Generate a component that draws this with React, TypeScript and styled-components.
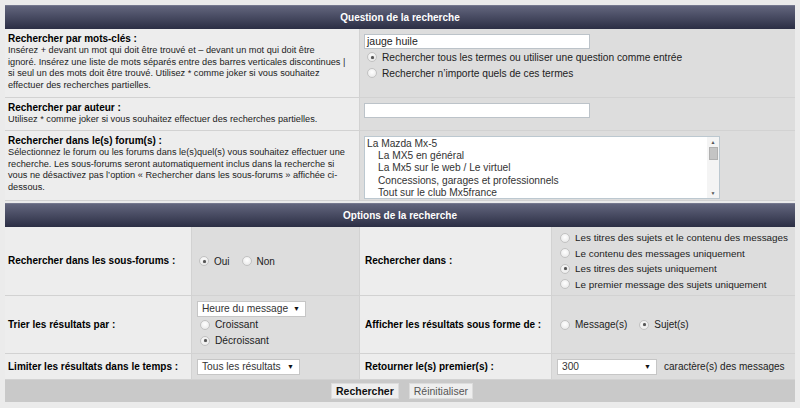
import React from "react";
import styled, { createGlobalStyle } from "styled-components";

const GlobalStyle = createGlobalStyle`
  html, body {
    margin: 0;
    padding: 0;
    background: #ebebeb;
  }
  body {
    font-family: "Liberation Sans", Arial, sans-serif;
    color: #111;
  }
`;

const Page = styled.div`
  width: 790px;
  padding: 5px;
`;

const SectionHeader = styled.div<{ $gap?: boolean }>`
  height: 24px;
  margin-top: ${(p) => (p.$gap ? "2px" : "0")};
  display: flex;
  align-items: center;
  justify-content: center;
  background: linear-gradient(#62657d, #2b2e44);
  border-top: 1px solid #75788e;
  box-sizing: border-box;
  color: #fff;
  font-weight: bold;
  font-size: 10px;
`;

const TopRow = styled.div<{ $height: number }>`
  display: grid;
  grid-template-columns: 355px 1fr;
  height: ${(p) => p.$height}px;
  border-bottom: 1px solid #d2d2d2;
  box-sizing: border-box;
`;

const Cell = styled.div<{ $tone: "light" | "dark" }>`
  background: ${(p) => (p.$tone === "light" ? "#ededed" : "#dddddd")};
  border-right: 1px solid #d2d2d2;
  box-sizing: border-box;
  &:last-child {
    border-right: none;
  }
`;

const DescCell = styled(Cell)`
  padding: 4px 4px 0 3px;
  overflow: hidden;
`;

const FieldCell = styled(Cell)`
  padding: 5px 4px 0 4px;
`;

const Label = styled.div`
  font-weight: bold;
  font-size: 10px;
  line-height: 12px;
  color: #000;
`;

const Explain = styled.div`
  font-size: 9.2px;
  line-height: 11.7px;
  color: #222;
  white-space: nowrap;
`;

const TextInput = styled.div`
  width: 226px;
  height: 15px;
  box-sizing: border-box;
  background: #fff;
  border: 1px solid #bcc3c9;
  font-size: 10.5px;
  line-height: 13px;
  padding-left: 2px;
  color: #222;
`;

const RadioLine = styled.div<{ $height?: number; $size?: number }>`
  display: flex;
  align-items: center;
  height: ${(p) => p.$height ?? 16}px;
  font-size: ${(p) => p.$size ?? 10.2}px;
  color: #222;
  white-space: nowrap;
`;

const RadioDot = styled.span<{ $checked?: boolean; $spaced?: boolean }>`
  display: inline-block;
  position: relative;
  width: 10px;
  height: 10px;
  box-sizing: border-box;
  border-radius: 50%;
  border: 1px solid #c2c2c2;
  background: radial-gradient(circle at 50% 40%, #ffffff, #e4e4e4);
  margin-left: ${(p) => (p.$spaced ? "12px" : "3px")};
  margin-right: 5px;
  flex-shrink: 0;
  &::after {
    content: "";
    display: ${(p) => (p.$checked ? "block" : "none")};
    position: absolute;
    left: 2.5px;
    top: 2.5px;
    width: 3px;
    height: 3px;
    border-radius: 50%;
    background: #555;
    box-shadow: 0 0 1px #777;
  }
`;

const ListBox = styled.div`
  width: 356px;
  height: 63px;
  display: flex;
  box-sizing: border-box;
  background: #fff;
  border: 1px solid #bcc8d0;
`;

const ListItems = styled.div`
  flex: 1;
  padding: 1px 0 0 2px;
  overflow: hidden;
`;

const ListItem = styled.div<{ $indent?: boolean }>`
  font-size: 10.2px;
  line-height: 12.2px;
  color: #333;
  padding-left: ${(p) => (p.$indent ? "11px" : "0")};
  white-space: nowrap;
`;

const ScrollTrack = styled.div`
  width: 12px;
  display: flex;
  flex-direction: column;
  align-items: center;
  background: #f4f4f4;
`;

const ScrollArrow = styled.div`
  height: 10px;
  display: flex;
  align-items: center;
  justify-content: center;
  font-size: 5px;
  color: #555;
`;

const ScrollThumb = styled.div`
  width: 9px;
  height: 13px;
  background: #c4c4c4;
  border: 1px solid #b0b0b0;
  box-sizing: border-box;
`;

const ScrollSpacer = styled.div`
  flex: 1;
`;

const OptRow = styled.div<{ $height: number }>`
  display: grid;
  grid-template-columns: 187px 168px 192px 1fr;
  height: ${(p) => p.$height}px;
  border-bottom: 1px solid #d2d2d2;
  box-sizing: border-box;
`;

const OptCell = styled(Cell)<{ $pad?: number }>`
  display: flex;
  flex-direction: column;
  justify-content: center;
  padding-left: ${(p) => p.$pad ?? 4}px;
`;

const Inline = styled.div`
  display: flex;
  align-items: center;
  font-size: 10px;
  color: #222;
  white-space: nowrap;
`;

const Select = styled.div<{ $width: number }>`
  width: ${(p) => p.$width}px;
  height: 16px;
  box-sizing: border-box;
  display: flex;
  align-items: center;
  justify-content: space-between;
  background: #fff;
  border: 1px solid #c6c6c6;
  padding: 0 5px 0 4px;
  font-size: 10.2px;
  color: #333;
  margin-right: 7px;
  &::after {
    content: "▼";
    font-size: 7px;
    color: #111;
  }
`;

const Footer = styled.div`
  height: 22px;
  display: flex;
  align-items: center;
  justify-content: center;
  gap: 10px;
  background: #c9c9c9;
  padding-left: 4px;
`;

const Button = styled.div<{ $primary?: boolean }>`
  height: 16px;
  display: flex;
  align-items: center;
  padding: 0 4px;
  background: #eeeeee;
  border: 1px solid #dcdcdc;
  box-sizing: border-box;
  font-size: 10.5px;
  font-weight: ${(p) => (p.$primary ? "bold" : "normal")};
  color: ${(p) => (p.$primary ? "#111" : "#555")};
`;

const forums = [
  { name: "La Mazda Mx-5", indent: false },
  { name: "La MX5 en général", indent: true },
  { name: "La Mx5 sur le web / Le virtuel", indent: true },
  { name: "Concessions, garages et professionnels", indent: true },
  { name: "Tout sur le club Mx5france", indent: true },
];

const searchIn = [
  { text: "Les titres des sujets et le contenu des messages", checked: false },
  { text: "Le contenu des messages uniquement", checked: false },
  { text: "Les titres des sujets uniquement", checked: true },
  { text: "Le premier message des sujets uniquement", checked: false },
];

const App = (): JSX.Element => {
  return (
    <>
      <GlobalStyle />
      <Page>
        <SectionHeader>Question de la recherche</SectionHeader>

        <TopRow $height={69}>
          <DescCell $tone="light">
            <Label>Rechercher par mots-clés :</Label>
            <Explain>
              Insérez + devant un mot qui doit être trouvé et – devant un mot qui doit être
              <br />
              ignoré. Insérez une liste de mots séparés entre des barres verticales discontinues |
              <br />
              si seul un des mots doit être trouvé. Utilisez * comme joker si vous souhaitez
              <br />
              effectuer des recherches partielles.
            </Explain>
          </DescCell>
          <FieldCell $tone="dark">
            <TextInput>jauge huile</TextInput>
            <RadioLine>
              <RadioDot $checked />
              Rechercher tous les termes ou utiliser une question comme entrée
            </RadioLine>
            <RadioLine>
              <RadioDot />
              Rechercher n’importe quels de ces termes
            </RadioLine>
          </FieldCell>
        </TopRow>

        <TopRow $height={33}>
          <DescCell $tone="light">
            <Label>Rechercher par auteur :</Label>
            <Explain>Utilisez * comme joker si vous souhaitez effectuer des recherches partielles.</Explain>
          </DescCell>
          <FieldCell $tone="dark">
            <TextInput />
          </FieldCell>
        </TopRow>

        <TopRow $height={70}>
          <DescCell $tone="light">
            <Label>Rechercher dans le(s) forum(s) :</Label>
            <Explain>
              Sélectionnez le forum ou les forums dans le(s)quel(s) vous souhaitez effectuer une
              <br />
              recherche. Les sous-forums seront automatiquement inclus dans la recherche si
              <br />
              vous ne désactivez pas l’option « Rechercher dans les sous-forums » affichée ci-
              <br />
              dessous.
            </Explain>
          </DescCell>
          <FieldCell $tone="dark">
            <ListBox>
              <ListItems>
                {forums.map((f) => (
                  <ListItem key={f.name} $indent={f.indent}>
                    {f.name}
                  </ListItem>
                ))}
              </ListItems>
              <ScrollTrack>
                <ScrollArrow>▲</ScrollArrow>
                <ScrollThumb />
                <ScrollSpacer />
                <ScrollArrow>▼</ScrollArrow>
              </ScrollTrack>
            </ListBox>
          </FieldCell>
        </TopRow>

        <SectionHeader $gap>Options de la recherche</SectionHeader>

        <OptRow $height={69}>
          <OptCell $tone="light" $pad={3}>
            <Label>Rechercher dans les sous-forums :</Label>
          </OptCell>
          <OptCell $tone="dark">
            <Inline>
              <RadioDot $checked />
              Oui
              <RadioDot $spaced />
              Non
            </Inline>
          </OptCell>
          <OptCell $tone="light" $pad={5}>
            <Label>Rechercher dans :</Label>
          </OptCell>
          <OptCell $tone="dark" $pad={5}>
            {searchIn.map((s) => (
              <RadioLine key={s.text} $height={15.5} $size={9.9}>
                <RadioDot $checked={s.checked} />
                {s.text}
              </RadioLine>
            ))}
          </OptCell>
        </OptRow>

        <OptRow $height={58}>
          <OptCell $tone="light" $pad={3}>
            <Label>Trier les résultats par :</Label>
          </OptCell>
          <OptCell $tone="dark" $pad={5}>
            <Select $width={109}>Heure du message</Select>
            <RadioLine $height={16}>
              <RadioDot />
              Croissant
            </RadioLine>
            <RadioLine $height={16}>
              <RadioDot $checked />
              Décroissant
            </RadioLine>
          </OptCell>
          <OptCell $tone="light" $pad={5}>
            <Label>Afficher les résultats sous forme de :</Label>
          </OptCell>
          <OptCell $tone="dark" $pad={5}>
            <Inline>
              <RadioDot />
              Message(s)
              <RadioDot $spaced $checked />
              Sujet(s)
            </Inline>
          </OptCell>
        </OptRow>

        <OptRow $height={26}>
          <OptCell $tone="light" $pad={3}>
            <Label>Limiter les résultats dans le temps :</Label>
          </OptCell>
          <OptCell $tone="dark" $pad={5}>
            <Select $width={103}>Tous les résultats</Select>
          </OptCell>
          <OptCell $tone="light" $pad={5}>
            <Label>Retourner le(s) premier(s) :</Label>
          </OptCell>
          <OptCell $tone="dark" $pad={5}>
            <Inline>
              <Select $width={100}>300</Select>
              caractère(s) des messages
            </Inline>
          </OptCell>
        </OptRow>

        <Footer>
          <Button $primary>Rechercher</Button>
          <Button>Réinitialiser</Button>
        </Footer>
      </Page>
    </>
  );
};

export default App;
